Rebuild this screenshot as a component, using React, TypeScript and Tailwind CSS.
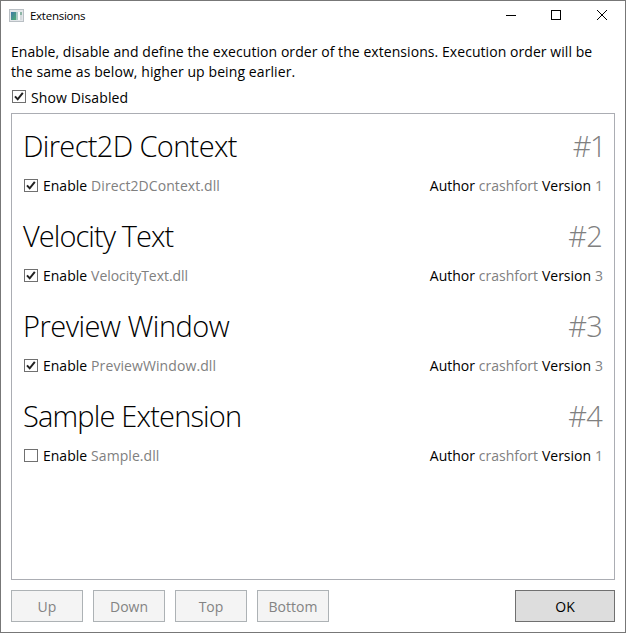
import React from 'react';

type Extension = {
  name: string;
  nameClass: string;
  rankClass: string;
  file: string;
  fileClass: string;
  author: string;
  version: number;
  enabled: boolean;
};

const extensions: Extension[] = [
  { name: 'Direct2D Context', nameClass: 'tracking-[-0.65px]', rankClass: '-mr-[3px] tracking-[-1.5px]', file: 'Direct2DContext.dll', fileClass: 'tracking-[0.07px]', author: 'crashfort', version: 1, enabled: true },
  { name: 'Velocity Text', nameClass: 'tracking-[-0.93px]', rankClass: 'tracking-[-0.8px]', file: 'VelocityText.dll', fileClass: 'tracking-[-0.04px]', author: 'crashfort', version: 3, enabled: true },
  { name: 'Preview Window', nameClass: 'tracking-[-0.5px]', rankClass: 'tracking-[-0.8px]', file: 'PreviewWindow.dll', fileClass: 'tracking-[0.09px]', author: 'crashfort', version: 3, enabled: true },
  { name: 'Sample Extension', nameClass: 'tracking-[-0.82px]', rankClass: 'tracking-[-0.8px]', file: 'Sample.dll', fileClass: 'tracking-[0.05px]', author: 'crashfort', version: 1, enabled: false },
];

function CheckBox({ checked }: { checked: boolean }) {
  return (
    <span className="mb-px flex h-[13px] w-[14px] shrink-0 items-center justify-center border border-[#707070] bg-white">
      {checked && (
        <svg width="12" height="11" viewBox="0 0 12 11" fill="none" stroke="#212121" strokeWidth="2">
          <path d="M2 5.3 L4.7 8.3 L9.8 1.8" />
        </svg>
      )}
    </span>
  );
}

function AppIcon() {
  return (
    <svg className="mb-px" width="15" height="13" viewBox="0 0 15 13">
      <defs>
        <linearGradient id="pane" x1="0" y1="0" x2="1" y2="1">
          <stop offset="0" stopColor="#3f78a8" />
          <stop offset="1" stopColor="#4fae72" />
        </linearGradient>
      </defs>
      <rect x="0.5" y="0.5" width="14" height="12" fill="#e3e6e9" stroke="#b9bfc4" />
      <rect x="2" y="3" width="5" height="8" fill="url(#pane)" />
      <rect x="7" y="3" width="2" height="8" fill="#a9c9c4" />
      <rect x="9" y="3" width="2" height="8" fill="#fafafa" />
      <rect x="11" y="3" width="2" height="3" fill="#8db5a5" />
      <rect x="11" y="6" width="2" height="5" fill="#d5dadd" />
    </svg>
  );
}

function ExtensionRow({ item, index }: { item: Extension; index: number }) {
  return (
    <div className="h-[90px] pt-[12px]">
      <div className="flex h-10 items-center justify-between text-[29px] leading-10 font-light">
        <span className={'-ml-px ' + item.nameClass}>{item.name}</span>
        <span className={'text-[#808080] ' + item.rankClass}>#{index + 1}</span>
      </div>
      <div className="mt-[10px] flex h-5 items-center justify-between">
        <div className="flex items-center">
          <CheckBox checked={item.enabled} />
          <span className="ml-[5px]">Enable</span>
          <span className={'ml-1 text-[#808080] ' + item.fileClass}>{item.file}</span>
        </div>
        <div className="-mr-px flex gap-1 tracking-[-0.02px]">
          <span>Author</span>
          <span className="text-[#808080]">{item.author}</span>
          <span>Version</span>
          <span className="text-[#808080]">{item.version}</span>
        </div>
      </div>
    </div>
  );
}

export default function App() {
  return (
    <div className="flex h-[633px] w-[626px] flex-col border border-[#777777] bg-white font-['Open_Sans',sans-serif] text-[14px] leading-5 whitespace-nowrap text-black">
      <header className="flex h-[29px] shrink-0 items-center pl-2">
        <AppIcon />
        <span className="ml-[6px] text-[11.5px] tracking-[-0.27px]">Extensions</span>
        <svg className="-mr-px ml-auto" width="138" height="29" viewBox="0 0 138 29" fill="none" stroke="#000">
          <path d="M18 14.5H28" />
          <rect x="63.5" y="9.5" width="9" height="9" />
          <path d="M109 9L119 19M119 9L109 19" />
        </svg>
      </header>
      <main className="flex min-h-0 flex-1 flex-col px-[10px] pt-3 pb-[10px]">
        <p className="tracking-[0.06px]">Enable, disable and define the execution order of the extensions. Execution order will be</p>
        <p className="tracking-[0.09px]">the same as below, higher up being earlier.</p>
        <div className="mt-[5px] flex h-5 items-center pl-px">
          <CheckBox checked />
          <span className="ml-[5px] pt-0.5 tracking-[0.1px]">Show Disabled</span>
        </div>
        <section className="mt-[6px] h-[467px] border border-[#abadb3] px-[12px]">
          {extensions.map((item, i) => (
            <ExtensionRow key={item.name} item={item} index={i} />
          ))}
        </section>
        <footer className="mt-[10px] flex gap-[10px]">
          {['Up', 'Down', 'Top', 'Bottom'].map((label) => (
            <button key={label} className="h-8 w-[72px] border border-[#adb2b5] bg-[#f4f4f4] pt-px text-[#838383]">
              {label}
            </button>
          ))}
          <button className="ml-auto h-8 w-[100px] border border-[#707070] bg-[#dddddd] pt-px">OK</button>
        </footer>
      </main>
    </div>
  );
}
